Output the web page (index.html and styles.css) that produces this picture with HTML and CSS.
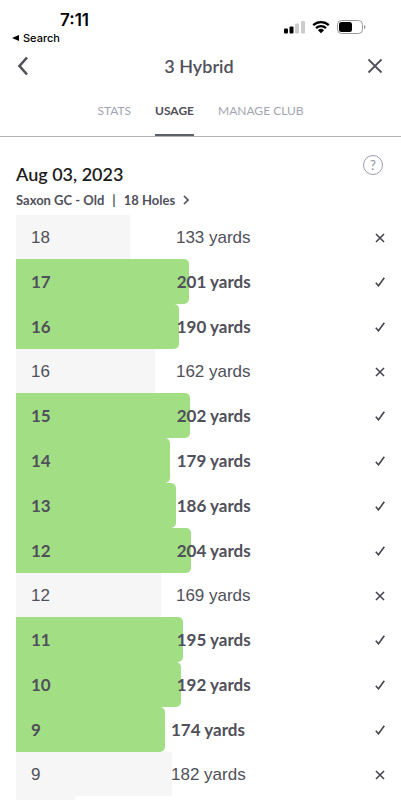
FILE: index.html
```html
<!DOCTYPE html>
<html lang="en">
<head>
    <meta charset="UTF-8">
    <meta name="viewport" content="width=device-width, initial-scale=1.0">
    <title>3 Hybrid</title>
    <link rel="stylesheet" href="styles.css">
</head>
<body>
    <div class="status-bar">
        <div class="status-left">
            <span class="time">7:11</span>
            <a class="back-app" href="#">
                <svg width="7" height="6" viewBox="0 0 7 6"><path d="M7 0v6L0 3z" fill="#000"/></svg>
                Search
            </a>
        </div>
        <div class="status-icons">
            <svg width="21" height="14" viewBox="0 0 21 14">
                <rect x="0" y="8.5" width="4" height="5" rx="1" fill="#000"/>
                <rect x="5.5" y="6.500" width="4" height="7" rx="1" fill="#000"/>
                <rect x="11" y="3.5" width="4" height="10" rx="1" fill="#ccc"/>
                <rect x="17" y="1" width="4" height="12.5" rx="1" fill="#ccc"/>
            </svg>
            <svg width="18" height="14" viewBox="0 0 18 14">
                <path d="M1.2 5.2a11.2 11.2 0 0 1 15.6 0M4 8.2a7.2 7.2 0 0 1 10 0" fill="none" stroke="#000" stroke-width="2.3"/>
                <path d="M5.9 10.2a4.5 4.5 0 0 1 6.2 0L9 13.3z" fill="#000"/>
            </svg>
            <svg width="29" height="14" viewBox="0 0 29 14">
                <rect x="0.5" y="0.5" width="25" height="13" rx="4" fill="none" stroke="#999"/>
                <rect x="2" y="2" width="13" height="10" rx="2.5" fill="#000"/>
                <path d="M27 5v4q1.5-.6 1.5-2T27 5z" fill="#999"/>
            </svg>
        </div>
    </div>

    <header class="title-bar">
        <button type="button" class="icon-button" aria-label="Back">
            <svg width="12" height="20" viewBox="0 0 12 20"><path d="M10 1.5L2.5 10l7.5 8.5" fill="none" stroke="#50505a" stroke-width="2.6"/></svg>
        </button>
        <h1>3 Hybrid</h1>
        <button type="button" class="icon-button" aria-label="Close">
            <svg width="16" height="16" viewBox="0 0 16 16"><path d="M1.5 1.5l13 13M14.5 1.5l-13 13" fill="none" stroke="#50505a" stroke-width="1.8"/></svg>
        </button>
    </header>

    <nav class="tabs">
        <a href="#">STATS</a>
        <a href="#" class="active">USAGE</a>
        <a href="#">MANAGE CLUB</a>
    </nav>

    <main>
        <div class="round-header">
            <div>
                <h2>Aug 03, 2023</h2>
                <a class="round-link" href="#">
                    <span>Saxon GC - Old</span>
                    <span>|</span>
                    <span>18 Holes</span>
                    <svg width="6" height="10" viewBox="0 0 6 10"><path d="M1 1l4 4-4 4" fill="none" stroke="#50505a" stroke-width="1.6"/></svg>
                </a>
            </div>
            <button type="button" class="help" aria-label="Help">?</button>
        </div>

        <ul class="shots" id="shots"></ul>
    </main>

    <script>
        const shots = [
            { hole: 18, yards: 133, hit: false },
            { hole: 17, yards: 201, hit: true },
            { hole: 16, yards: 190, hit: true },
            { hole: 16, yards: 162, hit: false },
            { hole: 15, yards: 202, hit: true },
            { hole: 14, yards: 179, hit: true },
            { hole: 13, yards: 186, hit: true },
            { hole: 12, yards: 204, hit: true },
            { hole: 12, yards: 169, hit: false },
            { hole: 11, yards: 195, hit: true },
            { hole: 10, yards: 192, hit: true },
            { hole: 9, yards: 174, hit: true },
            { hole: 9, yards: 182, hit: false }
        ];

        // full row width in yards
        const maxYards = 448;

        const checkIcon = '<svg role="img" aria-label="Hit" width="10" height="10" viewBox="0 0 10 10"><path d="M.8 5.8l2.7 3L9.3.8" fill="none" stroke="#45454f" stroke-width="1.6"/></svg>';
        const crossIcon = '<svg role="img" aria-label="Miss" width="10" height="10" viewBox="0 0 10 10"><path d="M1 1l8 8M9 1L1 9" fill="none" stroke="#45454f" stroke-width="1.6"/></svg>';

        const list = document.getElementById('shots');
        list.innerHTML = shots.map(shot => `
            <li class="shot ${shot.hit ? 'hit' : 'miss'}">
                <div class="bar" style="width: ${(shot.yards / maxYards * 100).toFixed(1)}%"></div>
                <span class="hole">${shot.hole}</span>
                <span class="yards">${shot.yards} yards</span>
                ${shot.hit ? checkIcon : crossIcon}
            </li>`
        ).join('') + `
            <li class="shot miss">
                <div class="bar" style="width: ${(68 / maxYards * 100).toFixed(1)}%"></div>
            </li>`;
    </script>
</body>
</html>
```

FILE: styles.css
```css
* {
    box-sizing: border-box;
}
body {
    margin: 0;
    height: 100vh;
    overflow: hidden;
    background-color: #fff;
    color: #50505a;
    font-family: Lato, "Open Sans", sans-serif;
}
h1, h2, ul {
    margin: 0;
    padding: 0;
}
a {
    color: inherit;
    text-decoration: none;
}
button {
    padding: 0;
    border: none;
    background: none;
    color: inherit;
    font-family: inherit;
    cursor: pointer;
}
svg {
    display: block;
}
.status-bar {
    display: flex;
    justify-content: space-between;
    padding: 10px 35px 0 12px;
    height: 46px;
    color: #000;
    font-family: Inter, sans-serif;
}
.status-left {
    display: flex;
    flex-direction: column;
}
.time {
    padding-left: 48px;
    font-size: 17px;
    font-weight: 600;
    line-height: 20px;
}
.back-app {
    display: flex;
    align-items: center;
    gap: 4px;
    font-size: 11px;
    font-weight: 500;
    line-height: 16px;
}
.status-icons {
    display: flex;
    gap: 7px;
    padding-top: 10px;
}
.title-bar {
    display: flex;
    align-items: center;
    justify-content: space-between;
    height: 40px;
    padding: 0 14px 0 11px;
}
.title-bar h1 {
    font-size: 18px;
    font-weight: 600;
}
.icon-button {
    display: flex;
    align-items: center;
    justify-content: center;
    width: 24px;
    height: 32px;
}
.tabs {
    display: flex;
    justify-content: center;
    gap: 24px;
    height: 51px;
    border-bottom: 1px solid #b4b4b8;
    color: #a2a5b0;
    font-size: 12px;
    line-height: 50px;
}
.tabs .active {
    border-bottom: 2px solid #5c606c;
    color: #50505a;
    font-weight: 700;
}
main {
    padding-left: 16px;
}
.round-header {
    display: flex;
    justify-content: space-between;
    align-items: flex-start;
    height: 78px;
    padding: 18px 18px 0 0;
}
.round-header h2 {
    margin-top: 7px;
    color: #1c1c20;
    font-size: 18px;
    font-weight: 600;
    line-height: 24px;
}
.round-link {
    display: flex;
    align-items: center;
    gap: 8px;
    font-size: 13px;
    font-weight: 700;
    line-height: 28px;
}
.help {
    width: 20px;
    height: 20px;
    border: 1px solid #9a9da8;
    border-radius: 50%;
    color: #8e919d;
    font-size: 13px;
    line-height: 18px;
}
.shots {
    list-style: none;
}
.shot {
    position: relative;
    display: flex;
    align-items: center;
    height: 45px;
    padding: 0 16px 0 15px;
    font-size: 17px;
}
.shot.miss {
    height: 44px;
    padding-top: 2px;
    font-family: "Liberation Sans", Arial, sans-serif;
}
.shot.hit {
    font-weight: 700;
}
/* the bar lies under the row's text */
.bar {
    position: absolute;
    top: 0;
    bottom: 0;
    left: 0;
    z-index: -1;
    background-color: #f6f6f7;
}
.hit .bar {
    border-radius: 0 5px 5px 0;
    background-color: #a2df84;
}
.hole {
    min-width: 14px;
}
.yards {
    flex: 1;
    margin-left: 126px;
}
```
